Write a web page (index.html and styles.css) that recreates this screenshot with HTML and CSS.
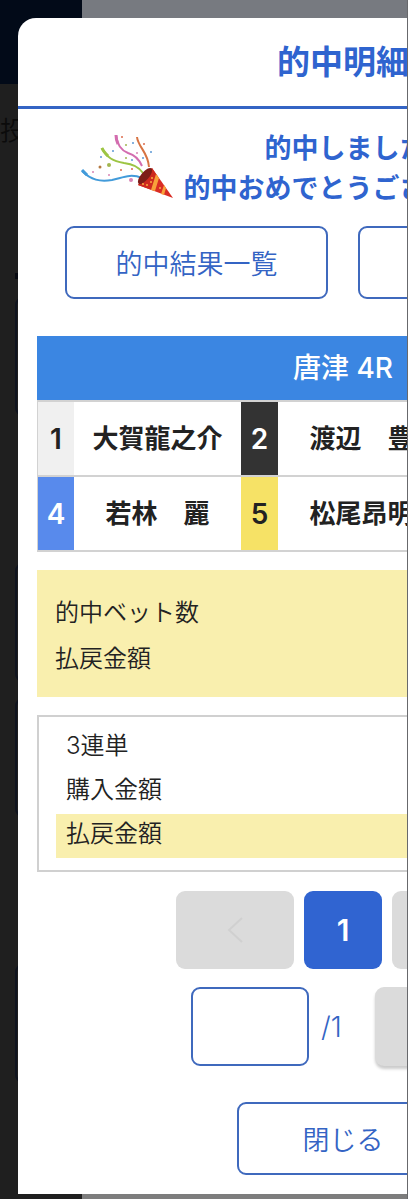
FILE: index.html
```html
<!DOCTYPE html>
<html lang="ja">
<head>
<meta charset="utf-8">
<meta name="viewport" content="width=device-width, initial-scale=1">
<title>的中明細</title>
<link rel="stylesheet" href="styles.css">
</head>
<body>
<div class="page">
  <div class="backdrop" aria-hidden="true">
    <div class="side">
      <div class="side-top"></div>
      <p class="side-label">投</p>
      <div class="side-rule"></div>
      <div class="side-card side-card-first"></div>
      <div class="side-card side-card-second"></div>
      <div class="side-card side-card-third"></div>
      <div class="side-card side-card-second"></div>
    </div>
  </div>

  <main class="modal" role="dialog" aria-labelledby="modal-title">
    <header class="modal-header">
      <h1 id="modal-title">的中明細</h1>
    </header>

    <section class="hero">
      <svg class="popper" viewBox="0 0 95 70" aria-hidden="true">
        <g fill="none" stroke-linecap="butt">
          <path d="M2 39C11 48 20 50 32 48C42 46 50 41 62 46" stroke="#429bda" stroke-width="2"/>
          <path d="M2 38L7 43" stroke="#429bda" stroke-width="3"/>
          <path d="M22 16C27 26 33 29 44 31C53 32 59 35 63 41" stroke="#9dc544" stroke-width="2"/>
          <path d="M22 16C23 19 26 22 28 24" stroke="#9dc544" stroke-width="3"/>
          <path d="M36 3C37 12 40 18 48 21C55 23 59 27 62 34" stroke="#d36daf" stroke-width="2"/>
          <path d="M36 3C36 7 37 10 38 12" stroke="#d36daf" stroke-width="3"/>
          <path d="M57 5C58 15 68 20 69 35" stroke="#d77443" stroke-width="2"/>
        </g>
        <path d="M72 36L93 66L58 53Z" fill="#d92c24"/>
        <path d="M72 36L78 45L72 58L58 53Z" fill="#ce291f"/>
        <path d="M76 42L79 46L75 59L71 58ZM84 53L86 56L84 63L81 62Z" fill="#f8a13b"/>
        <ellipse cx="65" cy="44" rx="10" ry="4" transform="rotate(-50 65 44)" fill="#7d1c18"/>
        <g fill="#f7ae42">
          <circle cx="72" cy="46" r="1"/><circle cx="67" cy="53" r="1"/><circle cx="71" cy="50" r="1"/><circle cx="80" cy="56" r="1"/><circle cx="63" cy="52" r="1"/>
        </g>
        <g fill="#dc6b4c"><circle cx="42" cy="5" r="1"/><circle cx="64" cy="12" r="1"/><circle cx="41" cy="38" r="1"/><circle cx="52" cy="37" r="1"/></g>
        <g fill="#d984b5"><circle cx="57" cy="21" r="1"/><circle cx="13" cy="40" r="1"/><circle cx="29" cy="43" r="1"/><circle cx="51" cy="48" r="2"/></g>
        <g fill="#5d99d4"><circle cx="53" cy="11" r="1"/><circle cx="71" cy="20" r="1"/><circle cx="33" cy="19" r="1"/><circle cx="21" cy="25" r="1"/><circle cx="52" cy="28" r="1"/><circle cx="63" cy="26" r="1"/></g>
        <g fill="#a2b650"><circle cx="46" cy="13" r="1"/><circle cx="46" cy="26" r="1"/><circle cx="29" cy="33" r="2"/></g>
        <circle cx="20" cy="35" r="1.5" fill="#b57942"/>
      </svg>
      <p class="hero-text">的中しました！<br>的中おめでとうございます！</p>
    </section>

    <div class="actions">
      <button class="outline-button" type="button">的中結果一覧</button>
      <button class="outline-button" type="button" aria-label="次の操作"></button>
    </div>

    <div class="content">
      <table class="racers">
        <colgroup>
          <col class="number-col"><col><col class="number-col"><col><col class="number-col"><col>
        </colgroup>
        <thead>
          <tr><th colspan="6">唐津 4R</th></tr>
        </thead>
        <tbody>
          <tr>
            <td class="number number-one">1</td><td>大賀龍之介</td>
            <td class="number number-two">2</td><td>渡辺　豊</td>
            <td></td><td></td>
          </tr>
          <tr>
            <td class="number number-four">4</td><td>若林　麗</td>
            <td class="number number-five">5</td><td>松尾昂明</td>
            <td></td><td></td>
          </tr>
        </tbody>
      </table>

      <div class="summary">
        <p>的中ベット数</p>
        <p>払戻金額</p>
      </div>

      <div class="bet">
        <p class="bet-row">3連単</p>
        <p class="bet-row">購入金額</p>
        <p class="bet-row bet-payout">払戻金額</p>
      </div>
    </div>

    <nav class="pager" aria-label="ページ">
      <button class="page-button page-arrow" type="button" aria-label="前へ" disabled>
        <svg class="chevron" viewBox="0 0 16 26" aria-hidden="true"><path d="M15 1L2 13L15 25"/></svg>
      </button>
      <button class="page-button page-current" type="button" aria-current="page">1</button>
      <button class="page-button page-arrow" type="button" aria-label="次へ" disabled></button>
    </nav>

    <form class="jump">
      <input class="jump-input" id="jump-page" type="text" inputmode="numeric" aria-label="ページ番号">
      <label class="jump-total" for="jump-page">/1</label>
      <button class="jump-button" type="button" aria-label="移動"></button>
    </form>

    <footer class="modal-footer">
      <button class="outline-button close-button" type="button">閉じる</button>
    </footer>
  </main>
</div>
</body>
</html>
```
FILE: styles.css
```css
* {
  box-sizing: border-box;
}

body {
  margin: 0;
  font-family: Inter, "Noto Sans CJK JP", sans-serif;
  font-weight: 350;
  color: #222;
}

h1,
p {
  margin: 0;
}

button,
input {
  font: inherit;
  color: inherit;
}

.page {
  position: relative;
  overflow: hidden;
  padding: 18px 18px 5px;
  background: linear-gradient(#777a80 18px, #7d7d7d 100px);
}

.page::after {
  content: "";
  position: absolute;
  inset: 0 0 0 auto;
  width: 1px;
  background: #68696c;
}

.backdrop {
  position: absolute;
  inset: 0;
}

.side {
  width: 82px;
  height: 100%;
  background: #1f1f1f;
}

.side-top {
  height: 84px;
  background: #020a18;
}

.side-label {
  padding-top: 26px;
  font-size: 26px;
  line-height: 42px;
  color: #0b0b0b;
}

.side-rule {
  height: 6px;
  margin: 121px 0 0 15px;
  background: #080a12;
}

.side-card {
  height: 119px;
  margin-left: 15px;
  border: 2px solid #10141f;
  border-radius: 8px;
}

.side-card-first {
  margin-top: 18px;
}

.side-card-second {
  margin-top: 147px;
}

.side-card-third {
  margin-top: 16px;
}

.modal {
  position: relative;
  min-width: 650px;
  background: #fff;
  border-radius: 18px 18px 0 0;
}

.modal-header {
  padding: 20px 0;
  border-bottom: 3px solid #3464c4;
  text-align: center;
}

.modal-header h1 {
  font-size: 33px;
  line-height: 48px;
  font-weight: 700;
  color: #2f64cf;
}

.hero {
  display: flex;
  justify-content: center;
  gap: 9px;
  padding: 20px 72px 17px 0;
}

.popper {
  width: 95px;
  height: 70px;
  margin-top: 3px;
}

.hero-text {
  font-size: 27px;
  line-height: 40px;
  font-weight: 700;
  text-align: center;
  color: #2f64cf;
}

.actions {
  display: flex;
  justify-content: center;
  gap: 30px;
}

.outline-button {
  width: 263px;
  height: 73px;
  padding: 0;
  border: 2px solid #3f69bd;
  border-radius: 9px;
  background: #fff;
  font-size: 27px;
  color: #3464c4;
}

.content {
  padding: 37px 19px 0;
}

.racers {
  width: 100%;
  table-layout: fixed;
  border-collapse: separate;
  border-spacing: 0;
  font-weight: 700;
  text-align: center;
}

.number-col {
  width: 37px;
}

.racers th {
  height: 64px;
  padding: 0;
  background: #3b86e2;
  font-size: 28px;
  line-height: 40px;
  font-weight: 500;
  color: #fff;
}

.racers td {
  height: 75px;
  padding: 0;
  border-bottom: 2px solid #d2d2d2;
  font-size: 26px;
  line-height: 40px;
  white-space: nowrap;
}

.racers tbody tr:first-child td {
  height: 77px;
  border-top: 2px solid #d2d2d2;
}

.racers td:first-child {
  border-left: 1px solid #d2d2d2;
}

.racers td:last-child {
  border-right: 1px solid #d2d2d2;
}

.racers .number {
  font-size: 28px;
  font-weight: 600;
}

.number-one {
  background: #f0f0f0;
}

.number-two {
  background: #333;
  color: #fff;
}

.number-four {
  background: #588aec;
  color: #fff;
}

.number-five {
  background: #f6e266;
}

.summary {
  margin-top: 18px;
  padding: 20px 18px 15px;
  background: #f9efae;
  font-size: 24px;
  line-height: 46px;
}

.bet {
  margin-top: 18px;
  padding: 9px 17px 12px;
  border: 2px solid #d0d0d0;
}

.bet-row {
  padding: 1px 10px 5px;
  font-size: 24px;
  line-height: 38px;
}

.bet-payout {
  background: #f9efae;
}

.pager {
  display: flex;
  justify-content: center;
  gap: 10px;
  padding-top: 19px;
}

.page-button {
  width: 78px;
  height: 78px;
  padding: 0;
  border: 0;
  border-radius: 9px;
}

.page-arrow {
  width: 118px;
  background: #dbdbdb;
}

.chevron {
  width: 16px;
  height: 26px;
  vertical-align: middle;
  fill: none;
  stroke: #d0d0d0;
  stroke-width: 2;
}

.page-current {
  background: #3064d1;
  font-size: 30px;
  font-weight: 600;
  color: #fff;
}

.jump {
  display: flex;
  justify-content: center;
  align-items: center;
  padding-top: 18px;
}

.jump-input {
  width: 118px;
  height: 79px;
  border: 2px solid #3f69bd;
  border-radius: 9px;
  background: #fff;
  text-align: center;
}

.jump-total {
  width: 66px;
  padding-left: 12px;
  font-size: 28px;
  line-height: 40px;
  color: #3464c4;
}

.jump-button {
  width: 120px;
  height: 79px;
  border: 0;
  border-radius: 9px;
  background: #dbdbdb;
  box-shadow: 0 3px 3px #ccc;
}

.modal-footer {
  padding: 36px 0 19px;
  text-align: center;
}

.close-button {
  display: block;
  width: 212px;
  margin: 0 auto;
}
```
